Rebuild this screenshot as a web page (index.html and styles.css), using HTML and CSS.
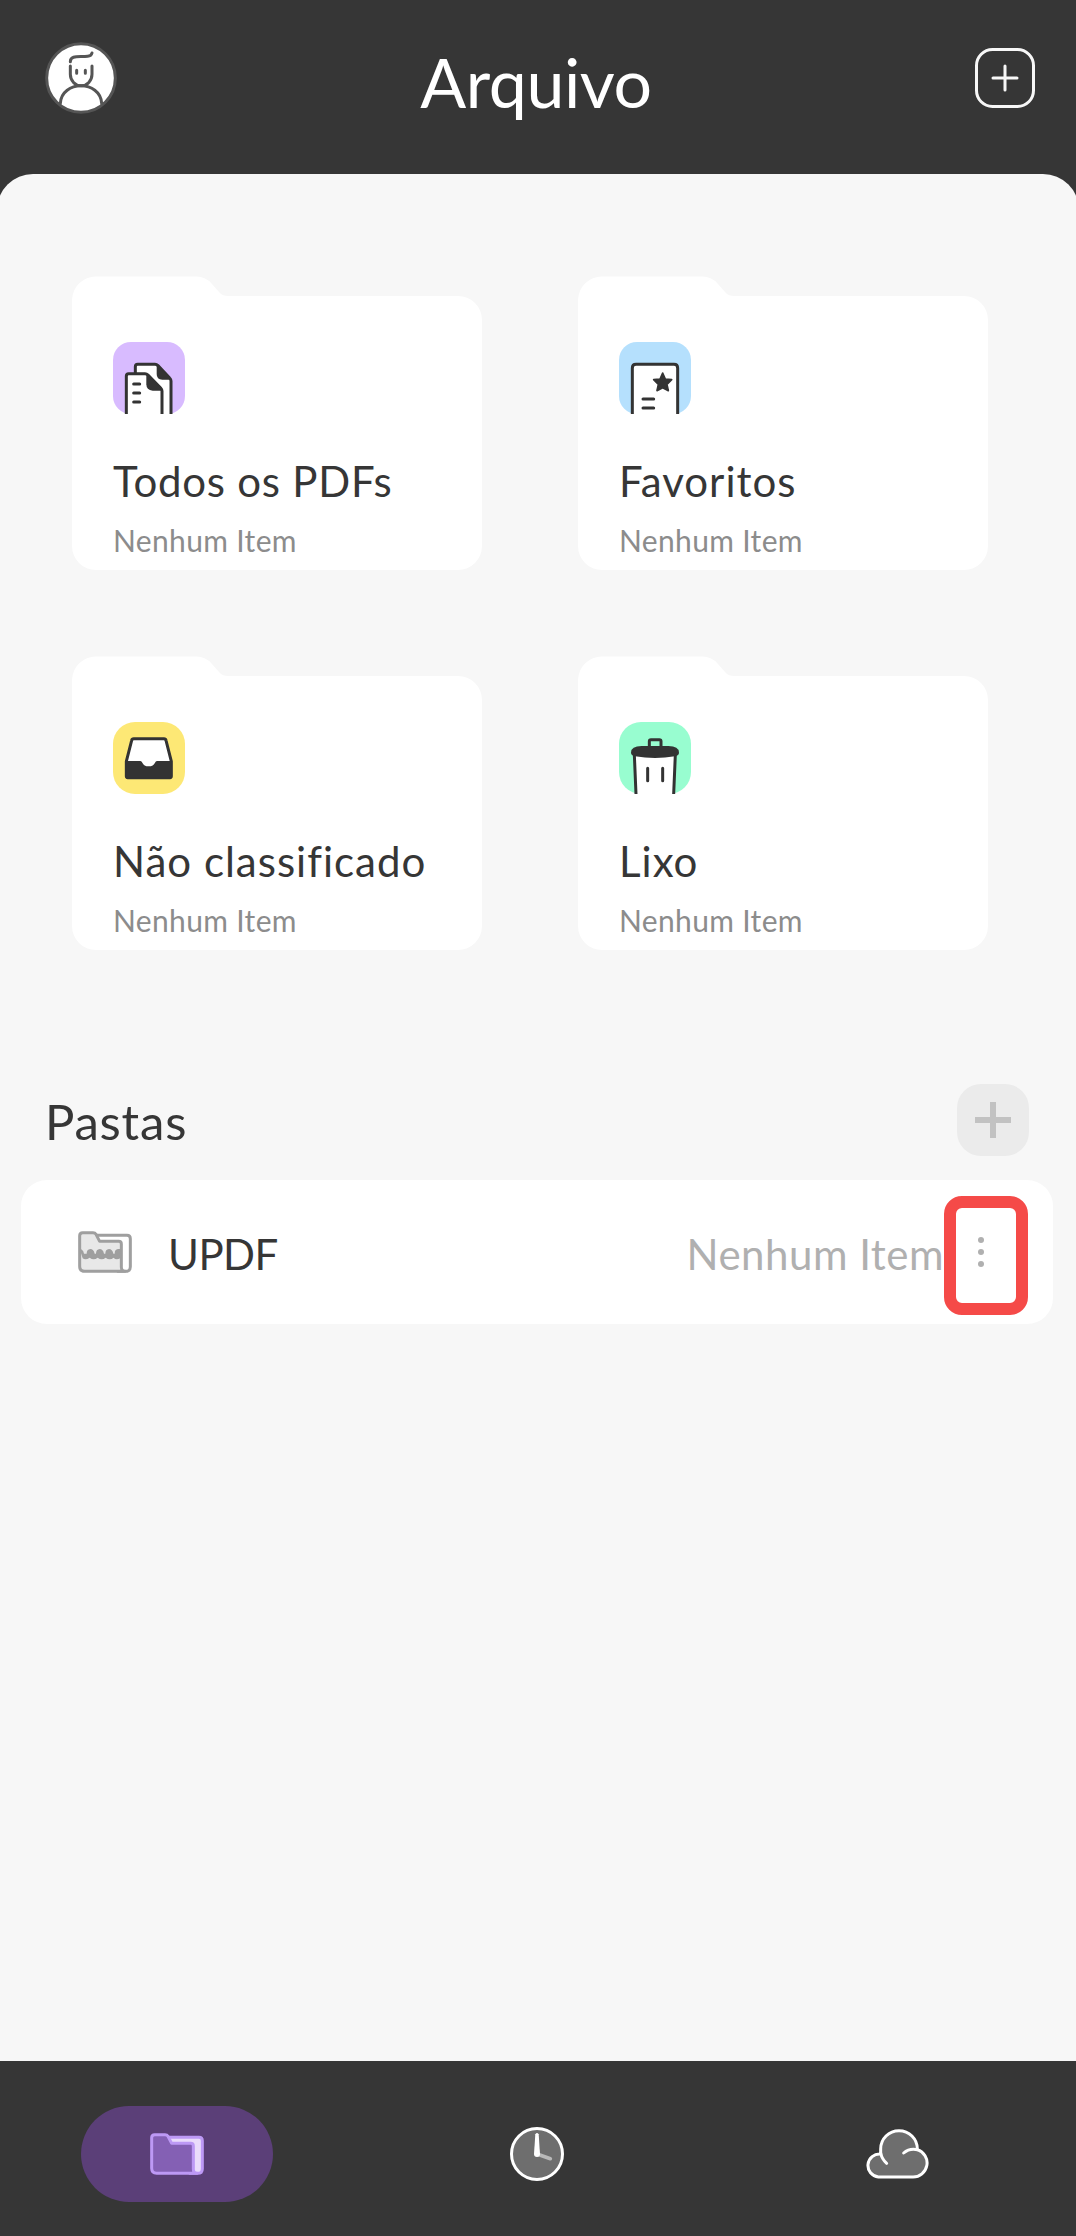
FILE: index.html
```html
<!DOCTYPE html>
<html lang="pt">
<head>
<meta charset="utf-8">
<title>Arquivo</title>
<link rel="stylesheet" href="styles.css">
</head>
<body>
<div class="app">
  <header class="topbar">
    <svg class="avatar" viewBox="0 0 216 216" fill="none" stroke="#555" stroke-width="9" stroke-linecap="round">
      <circle cx="108" cy="108" r="103" fill="#fff"/>
      <path d="M76 59C76 38 104 46 128 43Q139 42 141 33"/>
      <path d="M76 72V97a32 34 0 0 0 65 0V72"/>
      <path d="M95 85v9M121 85v9"/>
      <path d="M46 184C50 114 166 114 170 184"/>
    </svg>
    <h1 class="title">Arquivo</h1>
    <svg class="add" viewBox="0 0 60 60" fill="none" stroke="#f7f7f7" stroke-width="3" stroke-linecap="round">
      <rect x="1.5" y="1.5" width="57" height="57" rx="16"/>
      <path d="M30 18v24M18 30h24"/>
    </svg>
  </header>

  <main class="content">
    <section class="folders">
      <article class="card">
        <svg class="card-icon" viewBox="0 0 216 216">
          <rect width="216" height="216" rx="54" fill="#d8bbff"/>
          <g fill="#fff" stroke="#333" stroke-width="9">
            <path d="M67 216V74q0-7 7-7H126q5 0 9 4L170 108q4 4 4 9V216"/>
            <path d="M131 69L174 113H148q-17 0-17-17Z" fill="#333" stroke="none"/>
            <path d="M40 216V102q0-7 7-7H96q5 0 9 4L143 138q4 4 4 9V216"/>
            <path d="M100 96L148 146H119q-19-2-19-19Z" fill="#333" stroke="none"/>
          </g>
          <path d="M62 126h18M62 153h18M62 180h18" stroke="#333" stroke-width="9" stroke-linecap="round"/>
        </svg>
        <h2 class="card-title card-title-snug">Todos os PDFs</h2>
        <p class="card-sub">Nenhum Item</p>
      </article>
      <article class="card">
        <svg class="card-icon" viewBox="0 0 216 216">
          <rect width="216" height="216" rx="54" fill="#b5e0fd"/>
          <path d="M40 216V78q0-11 11-11H165q11 0 11 11V216" fill="#fff" stroke="#333" stroke-width="9"/>
          <path d="M131 93l8 18 19 2-14 14 4 19-17-9-17 9 4-19-14-14 19-2z" fill="#333" stroke="#333" stroke-width="5" stroke-linejoin="round"/>
          <path d="M72 171h32M72 198h32" stroke="#333" stroke-width="9" stroke-linecap="round"/>
        </svg>
        <h2 class="card-title">Favoritos</h2>
        <p class="card-sub">Nenhum Item</p>
      </article>
      <article class="card">
        <svg class="card-icon" viewBox="0 0 216 216">
          <rect width="216" height="216" rx="66" fill="#fde875"/>
          <path d="M40 118L56 55q1-5 6-5H153q5 0 6 5L175 118V163q0 4-4 4H44q-4 0-4-4Z" fill="#fff" stroke="#333" stroke-width="9" stroke-linejoin="round"/>
          <path d="M40 117H82q4 0 6 5a20 16 0 0 0 38 0q2-5 6-5H175V166H40Z" fill="#333"/>
        </svg>
        <h2 class="card-title">Não classificado</h2>
        <p class="card-sub">Nenhum Item</p>
      </article>
      <article class="card">
        <svg class="card-icon" viewBox="0 0 216 216">
          <rect width="216" height="216" rx="66" fill="#98fdd0"/>
          <path d="M46 98L51 216H163L169 98Z" fill="#fff"/>
          <path d="M46 98L51 216M169 98L164 216" stroke="#333" stroke-width="9"/>
          <path d="M91 76V58q0-5 5-5h25q5 0 5 5V76" fill="none" stroke="#333" stroke-width="9"/>
          <path d="M36 92q0-20 32-20h80q32 0 32 20 0 8-12 11-60 10-120 0-12-3-12-11z" fill="#333"/>
          <path d="M86 139v37M131 139v37" stroke="#333" stroke-width="9" stroke-linecap="round"/>
        </svg>
        <h2 class="card-title">Lixo</h2>
        <p class="card-sub">Nenhum Item</p>
      </article>
    </section>

    <section class="list">
      <div class="list-head">
        <h2 class="list-title">Pastas</h2>
        <svg class="list-add" viewBox="0 0 72 72">
          <rect width="72" height="72" rx="24" fill="#ebebeb"/>
          <path d="M36 18v36M18 36h36" stroke="#c2c2c2" stroke-width="6"/>
        </svg>
      </div>
      <div class="row">
        <svg class="row-icon" viewBox="0 0 162 126" stroke="#9f9f9f" stroke-width="9" stroke-linejoin="round">
          <path d="M50 13H147q10 0 10 10V107q0 14-14 14H120Z" fill="#fff"/>
          <path d="M5 14q0-9 9-9H45q6 0 9 5L65 31H122q8 0 8 8V108q0 13 11 13H20q-15 0-15-15Z" fill="#e8e8e8"/>
          <path d="M5 54q10 0 13 14h8q0-13 11-14 10 0 13 14h4q0-13 11-14 10 0 13 14h4q0-13 11-14 10 0 13 14h4q0-13 10-14h7V82q-14 6-20-2-12 10-24 0-12 10-24 0-12 10-24 0-12 8-21 2Z" fill="#9f9f9f" stroke="none"/>
        </svg>
        <span class="row-name">UPDF</span>
        <span class="row-count">Nenhum Item</span>
        <span class="more">
          <svg class="dots" viewBox="0 0 6 30" fill="#b0b0b0"><circle cx="3" cy="3" r="3"/><circle cx="3" cy="15" r="3"/><circle cx="3" cy="27" r="3"/></svg>
        </span>
      </div>
    </section>
  </main>

  <nav class="tabbar">
    <span class="tab tab-active">
      <svg class="tab-folder" viewBox="0 0 162 126" stroke="#bd99f5" stroke-width="9" stroke-linejoin="round">
        <path d="M50 13H147q10 0 10 10V107q0 14-14 14H120Z" fill="#eadcfb"/>
        <path d="M5 14q0-9 9-9H45q6 0 9 5L65 31H122q8 0 8 8V108q0 13 11 13H20q-15 0-15-15Z" fill="#8460b4"/>
      </svg>
    </span>
    <span class="tab">
      <svg class="tab-clock" viewBox="0 0 162 162">
        <circle cx="81" cy="81" r="76.500" fill="#6e6e6e" stroke="#fff" stroke-width="9"/>
        <path d="M81 81L121 95" stroke="#b9b9b9" stroke-width="11" stroke-linecap="round"/>
        <path d="M76 22q5-8 10 0L90 81a9 9 0 0 1-18 0Z" fill="#fff"/>
      </svg>
    </span>
    <span class="tab">
      <svg class="tab-cloud" viewBox="0 0 192 150" fill="#6e6e6e" stroke="#fff" stroke-width="9" stroke-linecap="round">
        <path d="M47 75V60A55 55 0 0 1 157 60V62A42 42 0 0 1 143 144H40A34.500 34.500 0 0 1 47 75Z"/>
        <path d="M47 72Q51 91 65 103M116 72Q133 57 157 62" fill="none"/>
      </svg>
    </span>
  </nav>
</div>
</body>
</html>
```
FILE: styles.css
```css
* { box-sizing: border-box; }

body {
  margin: 0;
  background: #363636;
  color: #363636;
  font-family: Lato, "Noto Sans", sans-serif;
}

h1, h2, p { margin: 0; font-weight: 400; }
svg { display: block; flex: none; }

.app {
  display: flex;
  flex-direction: column;
  height: 2236px;
  overflow: hidden;
}

.topbar {
  display: flex;
  height: 174px;
  padding: 42px 41px 0 45px;
}
.avatar { width: 72px; height: 72px; }
.add { width: 60px; height: 60px; margin-top: 6px; }
.title {
  flex: 1;
  margin: -1px 20px 0 0;
  color: #fff;
  font-size: 68px;
  line-height: 82px;
  letter-spacing: -0.4px;
  text-align: center;
}

.content {
  flex: 1;
  margin: 0 -3px;
  padding: 102px 26px 0 24px;
  border-radius: 36px 36px 0 0;
  background: #f7f7f7;
}

.folders {
  display: grid;
  grid-template-columns: 410px 410px;
  gap: 86px 96px;
  padding-left: 51px;
}
.card {
  height: 294px;
  padding: 66px 41px 0;
  background: #fff;
  clip-path: path("M0 24A24 24 0 0 1 24 0.500H124Q134 0.500 140 8L147 16Q150 20 156 20H386A24 24 0 0 1 410 44V270A24 24 0 0 1 386 294H24A24 24 0 0 1 0 270Z");
}
.card-icon { width: 72px; height: 72px; }
.card-title {
  margin-top: 42px;
  font-size: 42px;
  line-height: 50px;
  letter-spacing: 1px;
  white-space: nowrap;
}
.card-title-snug { letter-spacing: 0.75px; }
.card-sub {
  margin-top: 16px;
  color: #8c8c8c;
  font-size: 30px;
  line-height: 36px;
  letter-spacing: 0.35px;
}

.list { margin-top: 134px; }
.list-head {
  display: flex;
  align-items: center;
  justify-content: space-between;
  padding: 0 24px;
}
.list-title {
  padding-top: 2px;
  font-size: 49px;
  line-height: 60px;
  letter-spacing: 0.8px;
}
.list-add { width: 72px; height: 72px; }

.row {
  display: flex;
  align-items: center;
  height: 144px;
  margin-top: 24px;
  padding: 0 25px 0 57px;
  border-radius: 26px;
  background: #fff;
  font-size: 42px;
}
.row-icon { width: 54px; height: 42px; }
.row-name {
  margin-left: 36px;
  padding-top: 4px;
  letter-spacing: -0.5px;
}
.row-count {
  margin-left: auto;
  padding-top: 4px;
  color: #b0b0b0;
  letter-spacing: 0.5px;
}
.more {
  display: flex;
  align-items: center;
  justify-content: center;
  width: 84px;
  height: 119px;
  margin-top: 7px;
  border: 12px solid #f54a48;
  border-radius: 18px;
}
.dots { width: 6px; height: 30px; margin: -7px 10px 0 0; }

.tabbar {
  display: flex;
  justify-content: space-between;
  height: 175px;
  padding: 45px 83px 0 81px;
  background: #363636;
}
.tab {
  display: flex;
  align-items: center;
  justify-content: center;
  width: 192px;
  height: 96px;
}
.tab-active { border-radius: 48px; background: #5b3f78; }
.tab-folder { width: 54px; height: 42px; }
.tab-clock { width: 54px; height: 54px; }
.tab-cloud { width: 64px; height: 50px; }
```
